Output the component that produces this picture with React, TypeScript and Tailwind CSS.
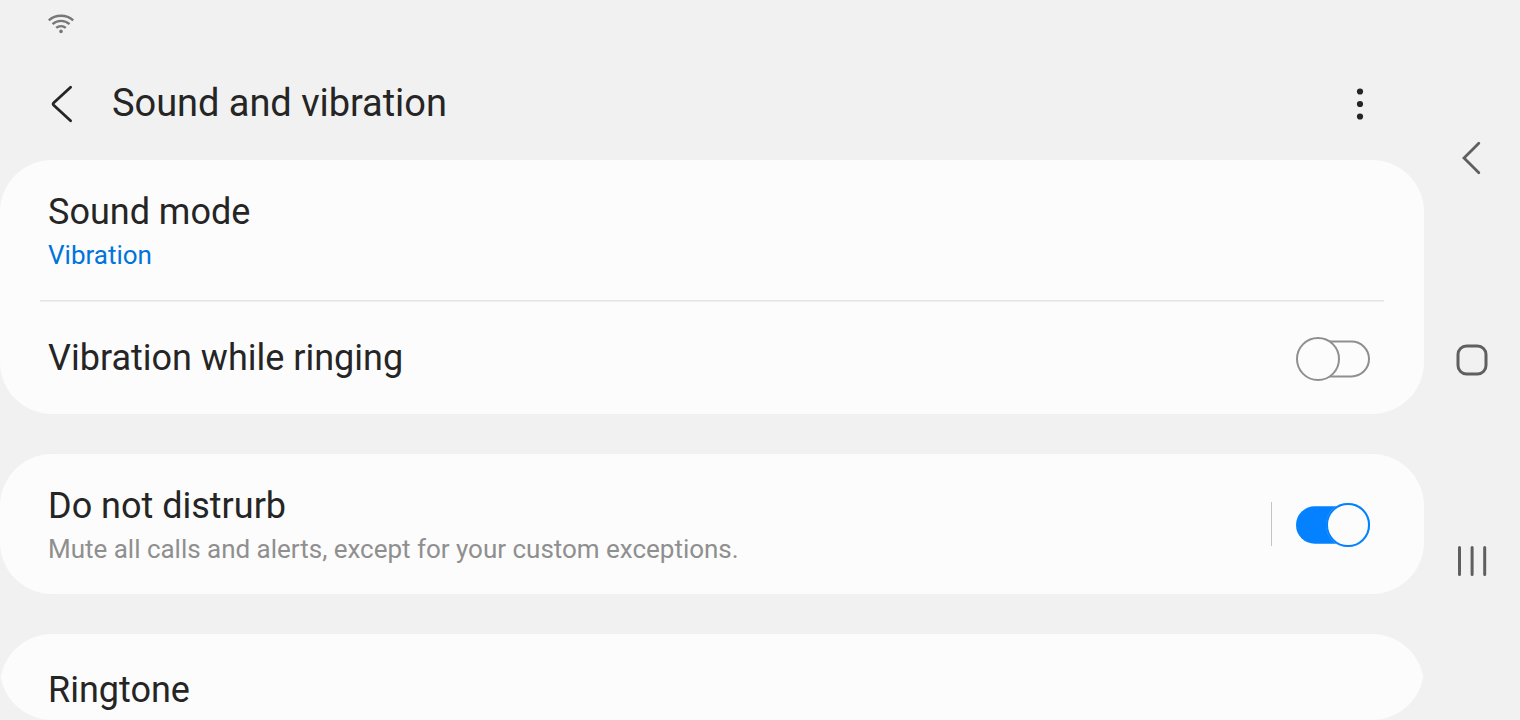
import type { ReactNode } from "react";

function WifiIcon() {
  return (
    <svg className="block h-[22px] w-[28px]" viewBox="0 0 28 22" fill="none" stroke="#777777" strokeWidth="2.3">
      <path d="M1.8 7.3C8.4 1.2 19.6 1.2 26.2 7.3" />
      <path d="M5.5 11.1C10.2 6.7 17.8 6.7 22.5 11.1" />
      <path d="M9.2 14.9C11.9 12.4 16.1 12.4 18.8 14.9" />
      <circle cx="14" cy="18.4" r="1.8" fill="#777777" stroke="none" />
    </svg>
  );
}

function Toggle({ on }: { on: boolean }) {
  return (
    <svg className="block h-[44px] w-[74px] shrink-0" viewBox="0 0 74 44" role="switch" aria-checked={on}>
      {on ? (
        <>
          <rect x="0" y="3.3" width="66" height="37.4" rx="18.7" fill="#0381fe" />
          <circle cx="52" cy="22" r="22.1" fill="#5fb0ff" />
          <circle cx="52" cy="22" r="21" fill="#fcfcfc" stroke="#0381fe" strokeWidth="2" />
        </>
      ) : (
        <>
          <rect x="9" y="4.6" width="64" height="34.8" rx="17.4" fill="#fcfcfc" stroke="#8f8f8f" strokeWidth="2" />
          <circle cx="22" cy="22" r="21" fill="#fcfcfc" stroke="#8f8f8f" strokeWidth="2" />
        </>
      )}
    </svg>
  );
}

function Title({ children }: { children: ReactNode }) {
  return <div className="text-[36px] leading-[44px] text-[#252525]">{children}</div>;
}

export default function App() {
  return (
    <div className="flex h-[720px] w-[1520px] overflow-hidden bg-[#f1f1f1] font-[Roboto,sans-serif] whitespace-nowrap">
      <main className="flex w-[1424px] flex-col">
        <div className="flex h-12 items-start pt-[13px] pl-[47px]">
          <WifiIcon />
        </div>
        <header className="flex h-28 items-center pr-[56px] pl-12">
          <svg className="block h-10 w-7 shrink-0" viewBox="0 0 28 40" fill="none" stroke="#252525" strokeWidth="2.8" strokeLinecap="round" strokeLinejoin="round">
            <path d="M22.6 3.3L5.5 19Q4.6 20 5.5 21L22.6 36.7" />
          </svg>
          <h1 className="ml-9 flex-1 pb-[2px] text-[38px] leading-[46px] tracking-[-0.04px] text-[#252525]">Sound and vibration</h1>
          <svg className="block h-10 w-4" viewBox="0 0 16 40" fill="#252525">
            <circle cx="8" cy="7.5" r="3.1" />
            <circle cx="8" cy="20" r="3.1" />
            <circle cx="8" cy="32.5" r="3.1" />
          </svg>
        </header>

        <section className="h-[254px] rounded-[52px] bg-[#fcfcfc]">
          <div className="h-[140px] px-12 pt-[30px]">
            <Title>Sound mode</Title>
            <div className="pt-[6px] text-[26px] leading-[31px] text-[#0074dc]">Vibration</div>
          </div>
          <div className="mx-10 h-[2px] border-b border-[#f0f0f0] bg-[#e4e4e4]" />
          <div className="flex h-[112px] items-center justify-between pr-[54px] pl-12">
            <Title>Vibration while ringing</Title>
            <div className="pt-[2px]">
              <Toggle on={false} />
            </div>
          </div>
        </section>

        <section className="mt-10 flex h-[140px] items-center rounded-[52px] bg-[#fcfcfc] pr-[54px] pl-12">
          <div className="h-full flex-1 pt-[30px]">
            <Title>Do not distrurb</Title>
            <div className="pt-[6px] text-[26px] leading-[31px] tracking-[-0.015px] text-[#8f8f8f]">
              Mute all calls and alerts, except for your custom exceptions.
            </div>
          </div>
          <div className="mr-6 h-11 w-px bg-[#c3c3c3]" />
          <div className="pt-[2px]">
            <Toggle on />
          </div>
        </section>

        <section className="mt-10 h-[86px] overflow-hidden rounded-t-[52px]">
          <div className="h-full rounded-b-[52px] bg-[#fcfcfc] px-12 pt-[34px]">
            <Title>Ringtone</Title>
          </div>
        </section>
      </main>

      <nav className="flex w-24 flex-col items-center pt-[138px]">
        <svg className="block h-10 w-8" viewBox="0 0 32 40" fill="none" stroke="#5f5f5f" strokeWidth="2.8" strokeLinecap="round" strokeLinejoin="miter">
          <path d="M22.8 5.2L8 20L22.8 34.8" />
        </svg>
        <svg className="mt-[162px] block h-10 w-10" viewBox="0 0 40 40" fill="none" stroke="#5f5f5f" strokeWidth="3">
          <rect x="6" y="6" width="28" height="28" rx="8.5" />
        </svg>
        <svg className="mt-[161px] block h-10 w-10" viewBox="0 0 40 40" fill="none" stroke="#5f5f5f" strokeWidth="3" strokeLinecap="round">
          <path d="M7.5 6.5V33.5M20.1 6.5V33.5M32.7 6.5V33.5" />
        </svg>
      </nav>
    </div>
  );
}
